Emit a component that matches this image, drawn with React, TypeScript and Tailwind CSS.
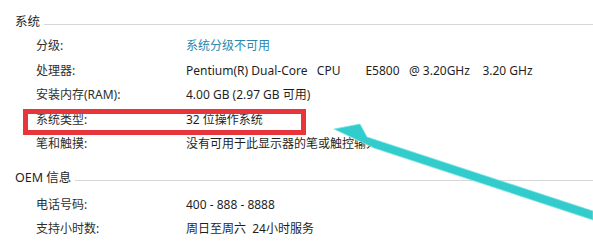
const font = { fontFamily: '"Noto Sans", "Noto Sans CJK SC", sans-serif' };

type Row = { label: string; value: string; link?: boolean };

const systemRows: Row[] = [
  { label: "分级:", value: "系统分级不可用", link: true },
  { label: "处理器:", value: "Pentium(R) Dual-Core   CPU        E5800   @ 3.20GHz    3.20 GHz" },
  { label: "安装内存(RAM):", value: "4.00 GB (2.97 GB 可用)" },
  { label: "系统类型:", value: "32 位操作系统" },
  { label: "笔和触摸:", value: "没有可用于此显示器的笔或触控输入" },
];

const oemRows: Row[] = [
  { label: "电话号码:", value: "400 - 888 - 8888" },
  { label: "支持小时数:", value: "周日至周六  24小时服务" },
];

const Heading = ({ text }: { text: string }) => (
  <div className="flex items-center h-6 pl-[15px] text-[12.5px] text-[#1e1e1e]">
    <span className="whitespace-pre">{text}</span>
    <div className="flex-1 h-px bg-[#d6d6d6] ml-1 mt-[4px]" />
  </div>
);

const InfoRow = ({ row }: { row: Row }) => (
  <div className="flex items-center h-[24.5px] text-[12px]">
    <div className="w-[186px] pl-[36px] text-[#2e2e2e]">{row.label}</div>
    <div className={row.link ? "whitespace-pre text-[#2b87ad]" : "whitespace-pre text-[#1f1f1f]"}>
      {row.value}
    </div>
  </div>
);

const App = () => {
  return (
    <div className="relative w-[593px] h-[245px] bg-white overflow-hidden" style={font}>
      <div className="flex flex-col pt-[10px]">
        <Heading text="系统" />
        {systemRows.map((r) => (
          <InfoRow key={r.label} row={r} />
        ))}
        <div className="h-[10px]" />
        <Heading text="OEM 信息" />
        <div className="h-[2px]" />
        {oemRows.map((r) => (
          <InfoRow key={r.label} row={r} />
        ))}
      </div>

      {/* red highlight */}
      <div className="absolute left-[23px] top-[109px] w-[283px] h-[26px] border-[5px] border-[#e8353b]" />

      {/* arrow */}
      <svg className="absolute left-0 top-0" width="593" height="245" viewBox="0 0 593 245">
        <polygon
          points="334,129 360,124 367,137 593,211 593,220 374,148"
          fill="#33cccc"
          stroke="#7fe3e3"
          strokeWidth="0.8"
          strokeLinejoin="round"
        />
      </svg>
    </div>
  );
};

export default App;
